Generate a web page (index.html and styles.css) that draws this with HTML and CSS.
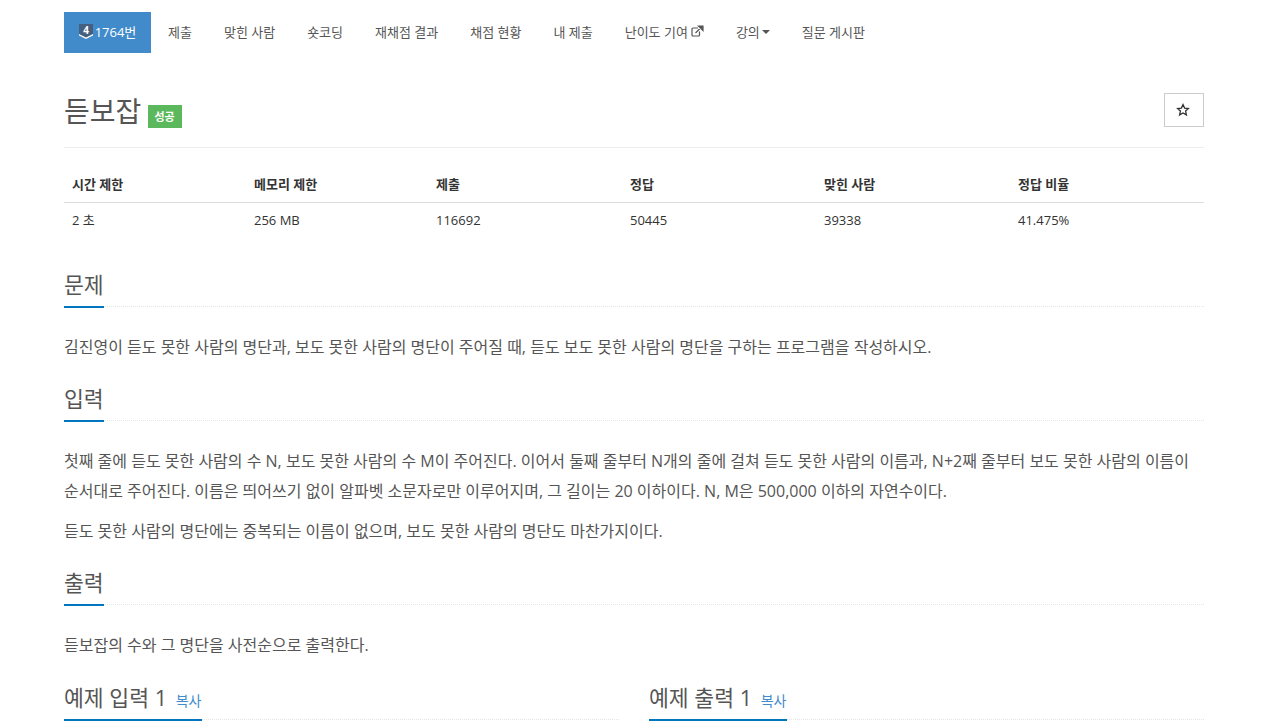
FILE: index.html
```html
<!DOCTYPE html>
<html lang="ko">
<head>
<meta charset="utf-8">
<title>듣보잡</title>
<link rel="stylesheet" href="styles.css">
</head>
<body>
<div class="container">
  <nav class="tabs">
    <a class="tab active"><svg class="tier" viewBox="0 0 14 15" width="14" height="15"><path d="M0 0H14V11L7 15L0 11Z" fill="#45607f"/><path d="M0 10L7 13.5L14 10V11.5L7 15L0 11.5Z" fill="#fff"/><text x="7" y="10" text-anchor="middle" class="tier-num">4</text></svg>1764번</a>
    <a class="tab">제출</a>
    <a class="tab">맞힌 사람</a>
    <a class="tab">숏코딩</a>
    <a class="tab">재채점 결과</a>
    <a class="tab">채점 현황</a>
    <a class="tab">내 제출</a>
    <a class="tab">난이도 기여 <svg class="ext" viewBox="0 0 13 12" width="13" height="12"><path d="M8.5 6.5V10a1 1 0 0 1-1 1H2a1 1 0 0 1-1-1V4a1 1 0 0 1 1-1h5" fill="none" stroke="#555" stroke-width="1.2"/><path d="M4.5 8L10.5 2M7.5 1H12V5.5Z" fill="#555" stroke="#555" stroke-width="1.2"/></svg></a>
    <a class="tab">강의<span class="caret"></span></a>
    <a class="tab">질문 게시판</a>
  </nav>

  <div class="page-header">
    <h1 class="title">듣보잡 <span class="label">성공</span></h1>
    <button class="star" type="button" aria-label="즐겨찾기"><svg viewBox="0 0 14 14" width="14" height="14"><path d="M7 1.6L8.6 5.1L12.4 5.5L9.6 8.1L10.4 11.9L7 10L3.6 11.9L4.4 8.1L1.6 5.5L5.4 5.1Z" fill="none" stroke="#333" stroke-width="1.3"/></svg></button>
  </div>

  <table class="info">
    <thead><tr><th>시간 제한</th><th>메모리 제한</th><th>제출</th><th>정답</th><th>맞힌 사람</th><th>정답 비율</th></tr></thead>
    <tbody><tr><td>2 초</td><td>256 MB</td><td>116692</td><td>50445</td><td>39338</td><td>41.475%</td></tr></tbody>
  </table>

  <section class="sec first">
    <div class="headline"><h2>문제</h2></div>
    <p>김진영이 듣도 못한 사람의 명단과, 보도 못한 사람의 명단이 주어질 때, 듣도 보도 못한 사람의 명단을 구하는 프로그램을 작성하시오.</p>
  </section>

  <section class="sec">
    <div class="headline"><h2>입력</h2></div>
    <p>첫째 줄에 듣도 못한 사람의 수 N, 보도 못한 사람의 수 M이 주어진다. 이어서 둘째 줄부터 N개의 줄에 걸쳐 듣도 못한 사람의 이름과, N+2째 줄부터 보도 못한 사람의 이름이 순서대로 주어진다. 이름은 띄어쓰기 없이 알파벳 소문자로만 이루어지며, 그 길이는 20 이하이다. N, M은 500,000 이하의 자연수이다.</p>
    <p>듣도 못한 사람의 명단에는 중복되는 이름이 없으며, 보도 못한 사람의 명단도 마찬가지이다.</p>
  </section>

  <section class="sec">
    <div class="headline"><h2>출력</h2></div>
    <p>듣보잡의 수와 그 명단을 사전순으로 출력한다.</p>
  </section>

  <div class="samples">
    <div class="headline"><h2>예제 입력 1 <a class="copy">복사</a></h2></div>
    <div class="headline"><h2>예제 출력 1 <a class="copy">복사</a></h2></div>
  </div>
</div>
</body>
</html>
```

FILE: styles.css
```css
* { box-sizing: border-box; }
html, body { margin: 0; padding: 0; }
body {
  background: #fff;
  color: #555;
  font-family: "Open Sans", "Noto Sans CJK KR", sans-serif;
  font-size: 14px;
  height: 727px;
  overflow: hidden;
}
.container { width: 1140px; margin-left: 64px; }

.tabs { display: flex; padding-top: 12px; height: 53px; }
.tab {
  display: flex;
  align-items: center;
  justify-content: center;
  height: 41px;
  padding: 0 16px 3px;
  font-size: 13px;
  color: #555;
  white-space: nowrap;
}
.tab:nth-child(2) { padding-left: 17px; }
.tab.active {
  width: 87px;
  padding: 0 0 2px;
  background: #428bca;
  color: #fff;
  font-weight: 400;
  font-size: 13px;
}
.tier { margin-right: 2px; }
.tier-num { font-size: 10px; font-weight: 700; fill: #fff; font-family: "Open Sans", sans-serif; }
.ext { margin-left: 3px; }
.caret {
  width: 0; height: 0; margin: 2px 0 0 2px;
  border-top: 4px solid #555;
  border-left: 4px solid transparent;
  border-right: 4px solid transparent;
}

.page-header {
  display: flex;
  justify-content: space-between;
  align-items: flex-start;
  margin-top: 40px;
  height: 55px;
  border-bottom: 1px solid #eee;
}
.title {
  margin: 0;
  font-size: 28px;
  font-weight: 400;
  line-height: 36px;
  color: #555;
}
.label {
  display: inline-block;
  width: 34px;
  height: 23px;
  margin-left: -1px;
  line-height: 23px;
  background: #5cb85c;
  color: #fff;
  font-size: 11px;
  font-weight: 700;
  text-align: center;
  vertical-align: 1px;
}
.star {
  display: flex;
  align-items: center;
  justify-content: center;
  width: 40px;
  height: 34px;
  padding: 0 2px 0 0;
  background: #fff;
  border: 1px solid #ccc;
}

.info {
  width: 1140px;
  margin-top: 18px;
  border-collapse: collapse;
  table-layout: fixed;
  font-size: 13px;
  color: #333;
}
.info th, .info td { text-align: left; padding: 0 8px; }
.info th { height: 36px; font-weight: 700; border-bottom: 1px solid #ddd; }
.info td { height: 36px; padding-bottom: 1px; }
.info th:nth-child(1) { width: 182px; }
.info th:nth-child(2) { width: 182px; }
.info th:nth-child(3) { width: 194px; }
.info th:nth-child(4) { width: 194px; }
.info th:nth-child(5) { width: 194px; }
.info th:nth-child(6) { width: 194px; }

.headline { border-bottom: 1px dotted #e5e5e5; height: 39px; }
.headline h2 {
  display: inline-block;
  margin: 0;
  height: 40px;
  padding: 0;
  border-bottom: 2px solid #0076c0;
  font-size: 21.6px;
  font-weight: 400;
  line-height: 33px;
  color: #555;
}
.sec.first { margin-top: 30px; }
.sec .headline { margin-bottom: 25px; }
.sec p {
  margin: 0 0 10px;
  font-size: 16px;
  line-height: 30px;
  color: #555;
}
.sec p:last-child { margin-bottom: 20px; }

.samples { display: grid; grid-template-columns: 555px 555px; gap: 30px; margin-top: 21px; }
.samples h2 { padding-right: 1px; }
.copy { font-size: 14px; color: #428bca; margin-left: 3px; }
```
